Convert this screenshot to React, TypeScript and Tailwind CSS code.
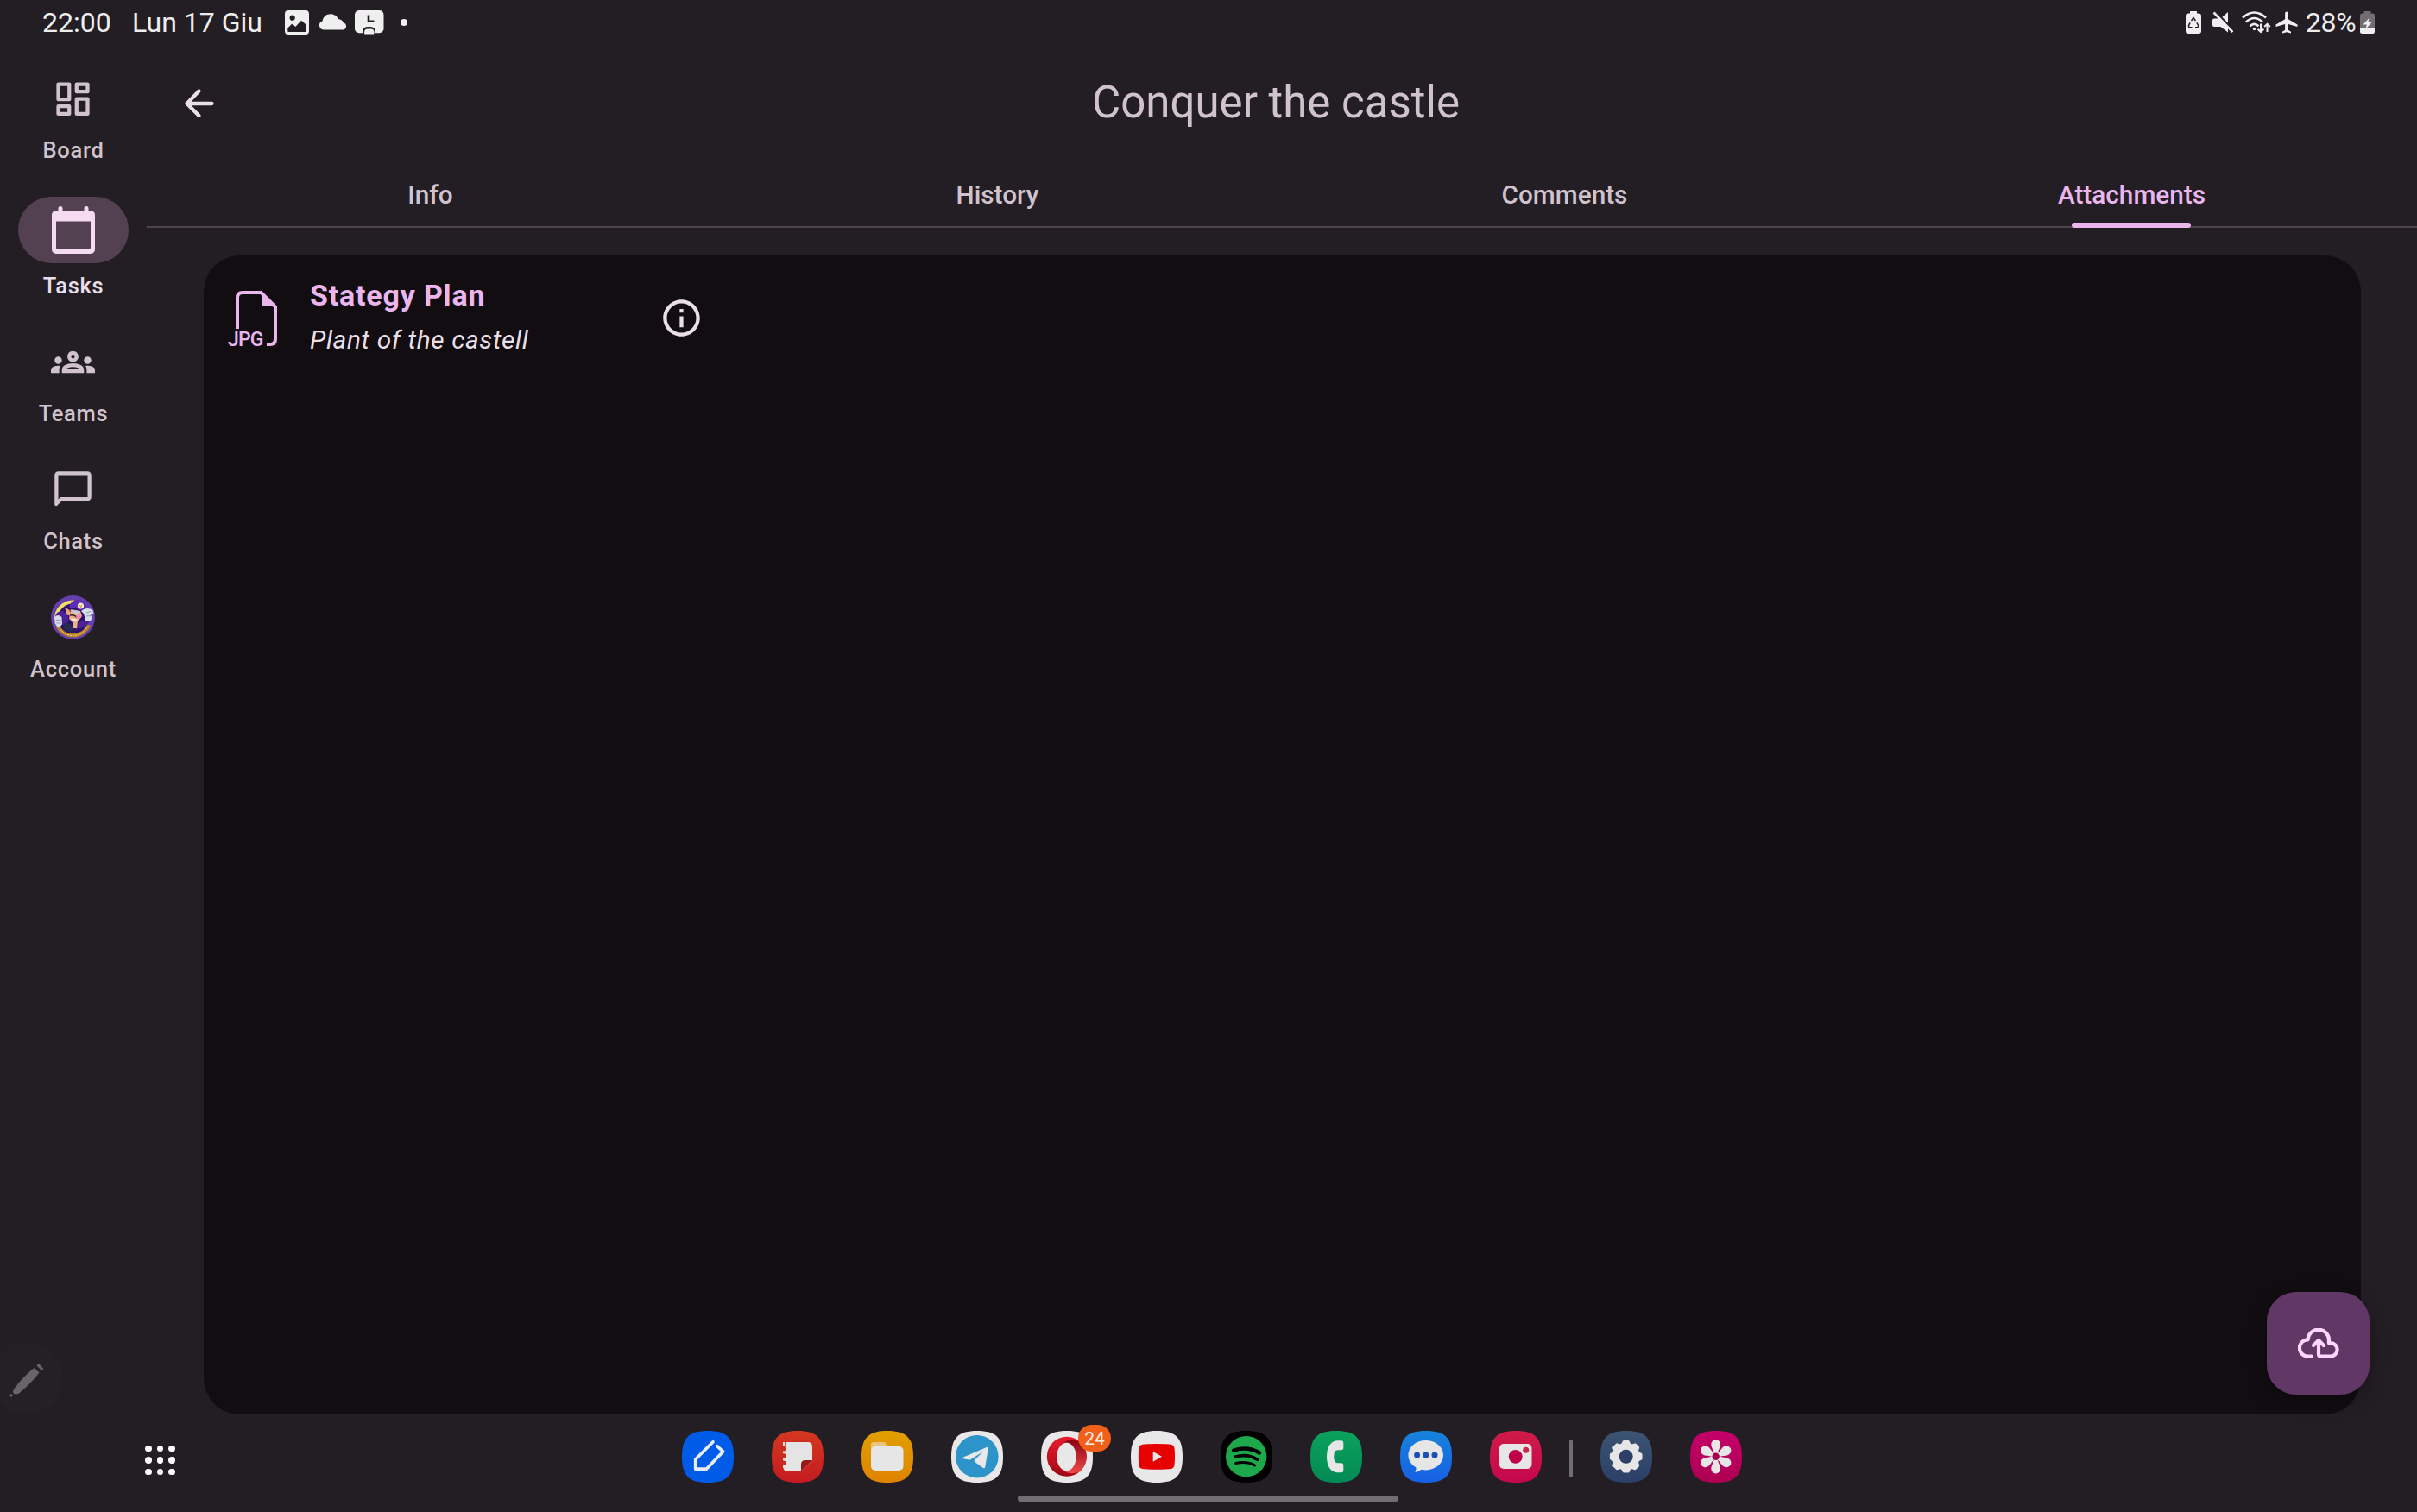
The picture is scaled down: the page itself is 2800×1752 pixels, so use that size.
import type { ReactNode } from "react";
import { MdOutlineGroups, MdInfoOutline, MdAirplanemodeActive } from "react-icons/md";

const SQUIRCLE = "M30 0C52 0 60 8 60 30S52 60 30 60 0 52 0 30 8 0 30 0Z";

function AppIcon({ id, from, to, children }: { id: string; from: string; to: string; children: ReactNode }) {
  return (
    <svg viewBox="0 0 60 60" className="size-[60px] shrink-0">
      <defs>
        <linearGradient id={id} x1="0" y1="0" x2="0" y2="1">
          <stop offset="0" stopColor={from} />
          <stop offset="1" stopColor={to} />
        </linearGradient>
      </defs>
      <path d={SQUIRCLE} fill={`url(#${id})`} />
      {children}
    </svg>
  );
}

function StatusBar() {
  return (
    <header className="flex h-[51px] shrink-0 items-center pl-[49px] text-[32px] leading-none text-[#ededed]">
      <span className="w-[104px]">22:00</span>
      <span className="w-[177px] whitespace-nowrap">Lun 17 Giu</span>
      <svg viewBox="0 0 28 28" className="size-[28px] shrink-0" fill="#efefef">
        <path
          fillRule="evenodd"
          d="M4 0H24a4 4 0 0 1 4 4V24a4 4 0 0 1-4 4H4a4 4 0 0 1-4-4V4a4 4 0 0 1 4-4ZM8.7 5.6a3.1 3.1 0 1 0 0 6.2 3.1 3.1 0 0 0 0-6.2ZM3.3 20.4V24q0 1 1 1H24q1 0 1-1V17L19.8 12.3q-.8-.6-1.5.1L12.3 19 9.3 16.2q-.9-.8-1.7 0Z"
        />
      </svg>
      <svg viewBox="0 0 32 19" className="ml-[12px] h-[19px] w-[32px] shrink-0" fill="#efefef">
        <path d="M5 18.4A5 5 0 0 1 3.6 8.6C4 3.6 8 .2 13 .2c4 0 7.3 2.200 8.800 5.700 3.200.1 5.500 2 6.100 4.700A4 4 0 0 1 28 18.400Z" />
      </svg>
      <svg viewBox="0 0 34 28" className="ml-[9px] h-[28px] w-[34px] shrink-0">
        <rect width="33.500" height="26.300" rx="5" fill="#efefef" />
        <path d="M9 28v-3.500a5.500 5.500 0 0 1 5.500-5.500h4a5.500 5.500 0 0 1 5.500 5.500V28Z" fill="#231e23" />
        <path d="M11 26.500v-1a4 4 0 0 1 4-4h3.500a4 4 0 0 1 4 4v1q0 1-1 1h-9.500q-1 0-1-1Z" fill="#efefef" />
        <path d="M16 5.500V12.700H22.500" fill="none" stroke="#231e23" strokeWidth="2.600" />
      </svg>
      <span className="ml-[19px] size-[8px] rounded-full bg-[#efefef]" />

      <div className="ml-auto flex items-center pr-[49px]">
        <svg viewBox="0 0 18 26" className="h-[26px] w-[18px]">
          <path d="M5 0h8v2.500h2a3 3 0 0 1 3 3V23a3 3 0 0 1-3 3H3a3 3 0 0 1-3-3V5.500a3 3 0 0 1 3-3h2Z" fill="#efefef" />
          <path d="M6.500 11 9 7.500 11.500 11M12.900 13.300 14.600 16.500Q15 18.800 12.500 18.800H11M7.500 18.800H5.500Q3 18.800 3.600 16.300L5.100 13.300" fill="none" stroke="#231e23" strokeWidth="1.500" />
        </svg>
        <svg viewBox="0 0 24 26" className="ml-[13px] h-[26px] w-[24px]" fill="#efefef">
          <path d="M18 1V24.500L9.500 18H2q-2 0-2-2v-5.500q0-2 2-2H9.500Z" />
          <path d="M1 -1.500 25.500 23.500" stroke="#231e23" strokeWidth="3" />
          <path d="M1.500 1.500 23.500 24" stroke="#efefef" strokeWidth="2.600" />
        </svg>
        <svg viewBox="0 0 34 26" className="ml-[10px] h-[26px] w-[34px]" fill="none" stroke="#efefef" strokeWidth="2.600">
          <path d="M1 7.500Q14.500-4.500 28 7.500M5 12.500Q14.500 3.500 24 12.500M9.500 17.200Q14.500 12.500 19.500 17.200" />
          <circle cx="14.500" cy="20.500" r="1.700" fill="#efefef" stroke="none" />
          <path d="M22 14.500V24M18.600 20.800 22 24.200 25.400 20.800M29.500 24V15M26.100 18 29.500 14.800 32.900 18" strokeWidth="2" />
        </svg>
        <MdAirplanemodeActive className="ml-[3px] size-[30px] text-[#efefef]" />
        <span className="ml-[7px] w-[61px] tracking-[-0.4px]">28%</span>
        <svg viewBox="0 0 17 26" className="ml-[2px] h-[26px] w-[17px]">
          <path d="M4.500 0h8v2.500h2a2.500 2.500 0 0 1 2.500 2.500V20H0V5a2.500 2.500 0 0 1 2.500-2.500h2Z" fill="#716d71" />
          <path d="M0 20H17v3.500a2.500 2.500 0 0 1-2.500 2.500h-12A2.500 2.500 0 0 1 0 23.500Z" fill="#efefef" />
          <path d="M10.500 8 3.500 15.500H7.800L6.300 21 13.500 13H9.300Z" fill="#efefef" />
        </svg>
      </div>
    </header>
  );
}

function BoardIcon() {
  return (
    <svg viewBox="0 0 24 24" className="size-[51px]" fill="none" stroke="#d0c3cd" strokeWidth="2" strokeLinejoin="round">
      <path d="M4 4H10V12.300H4ZM14 4H20V8.100H14ZM4 16.100H10V20.200H4ZM14 12.100H20V20.200H14Z" />
    </svg>
  );
}

function CalendarIcon() {
  return (
    <svg viewBox="0 0 50 56" className="h-[56px] w-[50px]" fill="#f5dbf1">
      <path
        fillRule="evenodd"
        d="M5 5H7.500V2.500a2.500 2.500 0 0 1 5 0V5h25V2.500a2.500 2.500 0 0 1 5 0V5H45a5 5 0 0 1 5 5V50a5 5 0 0 1-5 5H5a5 5 0 0 1-5-5V10A5 5 0 0 1 5 5ZM5 17.500V48q0 1.800 1.800 1.800H43.200q1.800 0 1.800-1.800V17.500Z"
      />
    </svg>
  );
}

function ChatIcon() {
  return (
    <svg viewBox="0 0 24 24" className="size-[51px]" fill="#d0c3cd">
      <path fillRule="evenodd" d="M4 2H20a2 2 0 0 1 2 2V16a2 2 0 0 1-2 2H6L3.500 20.500c-.55.55-1.500.2-1.500-.65V4a2 2 0 0 1 2-2ZM4 4V17.200L5.200 16H20V4Z" />
    </svg>
  );
}

function Avatar() {
  return (
    <svg viewBox="0 0 51 51" className="size-[51px]">
      <circle cx="25.500" cy="25.500" r="25.500" fill="#6540ad" />
      <circle cx="25.500" cy="26.500" r="18.500" fill="#2c1269" />
      <path d="M6 28A19.500 19.500 0 0 1 27 7.500" fill="none" stroke="#f2e064" strokeWidth="4" />
      <path d="M8 36A20 20 0 0 0 44 34" fill="none" stroke="#b88022" strokeWidth="4.500" />
      <path d="M10 37.500A18 18 0 0 0 42 36" fill="none" stroke="#f5e7b2" strokeWidth="1" strokeDasharray="2 1" />
      <path d="M5 24Q7 17 14 18L19 22Q22 29 18 33L11 34Z" fill="#4b2399" />
      <path d="M33 30 44 29Q44 36 34 38L27 40Z" fill="#4b2399" />
      <path d="M16 31 24 34 27 41Q20 44 14 39Z" fill="#252b50" />
      <path d="M16 13.500 21.500 17 23.500 24 18.500 22.500Z" fill="#eda184" />
      <path d="M23 16 34 18 36 24 31 30 30 38H26L25 31 21 27Z" fill="#efb183" />
      <path d="M25 17 33 18 32 22 26 20Z" fill="#b9cfe9" />
      <path d="M22 23Q28 22 30 26" fill="none" stroke="#31202d" strokeWidth="1.600" />
      <path d="M23.500 26.500 31 27.500 28.500 29.500 24 28.500Z" fill="#eef0f2" />
      <ellipse cx="32" cy="24.500" rx="2.800" ry="2.600" fill="#f287b8" />
      <path d="M21 15Q22 5 31 5 39 5 41 13L36 18Q27 13 21 15Z" fill="#5d2bb5" />
      <circle cx="34.500" cy="12" r="3.600" fill="#f5f1e6" />
      <path d="M33 11 34.500 13.500 36 10.500" fill="none" stroke="#cba91c" strokeWidth="1.200" />
      <path d="M38 16Q43 13.500 48.500 17L49.500 21 46 22 48 27Q45 31 40 29L38 21 35 18Z" fill="#d8ddea" />
      <path d="M4.500 25Q8 21 12.500 25L13 33Q11 37 7 36L4.500 32Z" fill="#d8ddea" />
      <path d="M6 28.500H11.500M6.500 32H11.500M41 20 46 18.500M41 24 46 23.500" stroke="#8088aa" strokeWidth="0.800" />
    </svg>
  );
}

function RailLabel({ active, children }: { active?: boolean; children: ReactNode }) {
  return (
    <span
      className={
        active
          ? "h-[34px] pl-[1px] text-[25.5px] leading-[34px] font-medium tracking-[0.7px] text-[#eadfe7]"
          : "h-[34px] pl-[1px] text-[25.5px] leading-[34px] font-medium tracking-[0.7px] text-[#d0c3cd]"
      }
    >
      {children}
    </span>
  );
}

function NavRail() {
  return (
    <nav className="relative flex w-[170px] shrink-0 flex-col items-center pt-[38px] pr-px">
      <div className="flex flex-col items-center gap-[17px]">
        <BoardIcon />
        <RailLabel>Board</RailLabel>
      </div>
      <div className="mt-[37px] flex flex-col items-center gap-[9px]">
        <div className="ml-px flex h-[77px] w-[128px] items-center justify-center rounded-full bg-[#534152]">
          <CalendarIcon />
        </div>
        <RailLabel active>Tasks</RailLabel>
      </div>
      <div className="mt-[46px] flex flex-col items-center gap-[17px]">
        <MdOutlineGroups className="size-[51px] text-[#d0c3cd]" />
        <RailLabel>Teams</RailLabel>
      </div>
      <div className="mt-[46px] flex flex-col items-center gap-[17px]">
        <ChatIcon />
        <RailLabel>Chats</RailLabel>
      </div>
      <div className="mt-[46px] flex flex-col items-center gap-[17px]">
        <Avatar />
        <RailLabel>Account</RailLabel>
      </div>
      <div className="absolute bottom-0 left-0 h-[84px] w-[74px] overflow-hidden">
        <div className="absolute top-0 right-[2px] size-[82px] rounded-full bg-[#252023] shadow-[0_1px_3px_#2a2527]" />
        <svg viewBox="0 0 40 40" className="absolute top-[25px] left-[11px] size-[40px]" fill="#696468">
          <path d="M28.500 5 34.500 10.500Q25 23 11 34.500 7.500 36.500 4.800 34.800 3 32.500 5.500 29 15 16 28.500 5Z" />
          <path d="M31.500 2.500q2-3 4.300-.6l2.600 2.900q1.700 2.200-.8 3.400Z" />
          <circle cx="2" cy="37" r="1.700" />
        </svg>
      </div>
    </nav>
  );
}

const TABS = ["Info", "History", "Comments", "Attachments"];

function Tabs() {
  return (
    <div className="flex h-[77px] shrink-0 border-b-2 border-[#4d444c]">
      {TABS.map((tab) => {
        const active = tab === "Attachments";
        return (
          <div
            key={tab}
            className={
              active
                ? "relative flex h-[77px] w-[657px] items-center justify-center pt-[2px] text-[29.75px] font-medium text-[#ebb5ed]"
                : "relative flex h-[77px] w-[657px] items-center justify-center pt-[2px] text-[29.75px] font-medium text-[#d0c3cd]"
            }
          >
            {tab}
            {active && <span className="absolute bottom-0 left-[259px] h-[6px] w-[138px] rounded-[3px] bg-[#ebb5ed]" />}
          </div>
        );
      })}
    </div>
  );
}

function JpgFileIcon() {
  return (
    <div className="relative h-[64px] w-[56px] shrink-0">
      <svg viewBox="0 0 56 64" className="size-full" fill="none" stroke="#ebb5ed" strokeWidth="4">
        <path d="M10 44V8Q10 2 16 2H37.500L54 18.500V56Q54 62 48 62H44" />
        <path d="M38 1.500 54.500 18H43Q38 18 38 13Z" fill="#ebb5ed" stroke="none" />
      </svg>
      <span className="absolute top-[45px] -left-px text-[23px] leading-[24px] font-medium tracking-[-0.8px] text-[#ebb5ed]">JPG</span>
    </div>
  );
}

function Content() {
  return (
    <main className="flex min-w-0 grow flex-col">
      <div className="flex h-[136px] shrink-0 items-center pl-[42px]">
        <svg viewBox="0 0 38 38" className="mt-px size-[38px]" fill="none" stroke="#eadfe7" strokeWidth="4.300" strokeLinecap="round" strokeLinejoin="round">
          <path d="M18.500 4.500 4.500 19 18.500 33M4.500 19H33.500" />
        </svg>
        <h1 className="grow pr-[94px] pb-[2px] text-center text-[51px] leading-none text-[#d0c3cd]">Conquer the castle</h1>
      </div>
      <Tabs />
      <section className="relative mt-[32px] mr-[65px] ml-[66px] grow rounded-[42px] bg-[#110d11]">
        <div className="flex pt-[24px] pl-[29px]">
          <div className="pt-[17px]">
            <JpgFileIcon />
          </div>
          <div className="ml-[38px] flex w-[384px] flex-col">
            <span className="text-[34px] leading-[44px] font-bold tracking-[0.8px] text-[#ebb5ed]">Stategy Plan</span>
            <span className="mt-[8px] text-[29.75px] leading-[44px] tracking-[0.68px] text-[#eadfe7] italic">Plant of the castell</span>
          </div>
          <div className="ml-[21px] pt-[23px]">
            <MdInfoOutline className="size-[51px] text-[#eadfe7]" />
          </div>
        </div>
        <button className="absolute -right-[10px] bottom-[23px] flex size-[119px] items-center justify-center rounded-[34px] bg-[#613766] shadow-[0_8px_24px_rgba(0,0,0,0.3)]">
          <svg viewBox="0 0 48 36" className="h-[36px] w-[48px]" fill="none" stroke="#ffd6fe" strokeWidth="4.200" strokeLinecap="round" strokeLinejoin="round">
            <path d="M15.500 32.500H11.500A9.600 9.600 0 0 1 11.500 13.300 12.200 12.200 0 0 1 36 14.500V17.200H38A7.600 7.600 0 0 1 38 32.500H26.500Q24 32.500 24 30V14.500M18 20 24 14 30 20" />
          </svg>
        </button>
      </section>
    </main>
  );
}

function DockApps() {
  return (
    <div className="flex items-center gap-[44px]">
      <AppIcon id="pen" from="#005ce8" to="#005ce8">
        <path d="M36 12.700 15.700 33V44.200H28.300L47.700 24 41 17.800" fill="none" stroke="#e6ecf8" strokeWidth="3.700" strokeLinecap="round" strokeLinejoin="round" />
      </AppIcon>
      <AppIcon id="notes" from="#d43820" to="#c41b20">
        <path d="M16 13H41.500Q47 13 47 18.500V34L34 46.700H18Q13.500 46.700 13.500 42Z" fill="#e4e4e4" />
        <path d="M34 46.700V39Q34 34 39 34H47Z" fill="#98181a" />
        <g fill="#cd2b20">
          <circle cx="13.500" cy="20.800" r="2.900" />
          <circle cx="13.500" cy="29" r="2.900" />
          <circle cx="13.500" cy="37.200" r="2.900" />
        </g>
        <path d="M13 13H15V17.500H13ZM13 23.500H15V26.300H13ZM13 31.700H15V34.500H13ZM13 40H15V43H13Z" fill="#e4e4e4" />
      </AppIcon>
      <AppIcon id="files" from="#e0a000" to="#df8300">
        <path d="M11 25V16Q11 13 14 13H25.500Q28.700 13 28.700 16V25Z" fill="#e8c47c" />
        <rect x="11" y="18" width="37.500" height="28" rx="5" fill="#e6e6e6" />
      </AppIcon>
      <AppIcon id="telegram" from="#e8e8e8" to="#e8e8e8">
        <circle cx="29.800" cy="29.700" r="24.800" fill="#2c94c9" />
        <path d="M14 30.500 41 19Q43.200 18.300 42.800 20.500L39.200 42Q38.800 44 37 42.900L27.300 36Q25.900 34.800 27.200 33.400L37 24 21.500 33.800 13.800 32.200Q12.500 31.500 14 30.500Z" fill="#e8e8e8" />
      </AppIcon>
      <div className="relative">
        <AppIcon id="opera" from="#e8e8e8" to="#e8e8e8">
          <defs>
            <linearGradient id="operaRing" x1="0" y1="0" x2="0" y2="1">
              <stop offset="0" stopColor="#e81c2e" />
              <stop offset="1" stopColor="#a00714" />
            </linearGradient>
            <linearGradient id="operaSide" x1="0" y1="0" x2="0" y2="1">
              <stop offset="0" stopColor="#8c0512" />
              <stop offset="1" stopColor="#f04a4a" />
            </linearGradient>
          </defs>
          <circle cx="29.800" cy="29.800" r="23" fill="url(#operaRing)" />
          <path d="M25 14.500C31 9 39 10 45.500 13A23 23 0 0 1 45.500 46.700C38 50.500 30 50 25 45Z" fill="url(#operaSide)" />
          <ellipse cx="29.500" cy="30" rx="11.200" ry="16.300" fill="#e8e8e8" />
        </AppIcon>
        <span className="absolute -top-[7px] left-[43px] flex h-[31px] w-[38px] items-center justify-center rounded-full bg-[#f0601a] pt-px text-[21px] leading-none text-[#f4eeea]">24</span>
      </div>
      <AppIcon id="youtube" from="#e8e8e8" to="#e8e8e8">
        <path d="M30 15Q42 15 46.500 15.700 50 16.500 50.500 20 51 25 51 29.800T50.500 39.700Q50 43.200 46.500 44 42 44.700 30 44.700T13.500 44Q9.800 43.200 9.300 39.700 8.800 35 8.800 29.800T9.300 20Q9.800 16.500 13.500 15.700 18 15 30 15Z" fill="#e60000" />
        <path d="M25.700 24 36 29.800 25.700 35.700Z" fill="#e8e8e8" />
      </AppIcon>
      <AppIcon id="spotify" from="#000000" to="#000000">
        <circle cx="29.700" cy="29.700" r="23.700" fill="#1ea84c" />
        <g fill="none" stroke="#000" strokeLinecap="round">
          <path d="M15.200 22.500Q31.500 17.500 45 25.500" strokeWidth="4.400" />
          <path d="M16.700 30.200Q31 26 42.500 33.200" strokeWidth="3.700" />
          <path d="M17.700 37.500Q30 34.500 39.700 40" strokeWidth="3" />
        </g>
      </AppIcon>
      <AppIcon id="phone" from="#0ba25c" to="#038a55">
        <path d="M35.800 11.200H31C23 12 19 19 19 29.700S23 47.500 31 48.300H35.800Q38.300 48.300 38.300 45.800V40Q38.300 37.200 35.800 37.200H31.500Q27.200 37.200 27.200 29.700T31.500 22.200H35.800Q38.300 22.200 38.300 19.600V13.700Q38.300 11.200 35.800 11.200Z" fill="#e6e6e6" />
      </AppIcon>
      <AppIcon id="messages" from="#1684dc" to="#185fe4">
        <ellipse cx="29.700" cy="28.200" rx="20.300" ry="17.200" fill="#e6e6e6" />
        <path d="M18 40Q19.500 44 17.300 48 22 47.500 25.500 44Z" fill="#e6e6e6" />
        <g fill="#1c50b8">
          <circle cx="19.600" cy="28" r="3.500" />
          <circle cx="29.800" cy="28" r="3.500" />
          <circle cx="40" cy="28" r="3.500" />
        </g>
      </AppIcon>
      <AppIcon id="camera" from="#d01c48" to="#c4074c">
        <rect x="11" y="15" width="37.500" height="29" rx="5" fill="#e6e6e6" />
        <circle cx="29.700" cy="29.800" r="7.900" fill="#bf0048" />
        <circle cx="41.700" cy="22.200" r="3.500" fill="#cc2647" />
      </AppIcon>
    </div>
  );
}

function Dock() {
  return (
    <footer className="flex h-[113px] shrink-0 flex-col pt-[19px]">
      <div className="flex h-[60px] items-center pl-[168px]">
        <div className="mt-[8px] mr-[587px] grid w-[35px] grid-cols-3 justify-between gap-[6px]">
          {Array.from({ length: 9 }, (_, i) => (
            <span key={i} className="size-[7.500px] rounded-full bg-white" />
          ))}
        </div>
        <DockApps />
        <span className="mx-[32px] mt-[3px] h-[44px] w-[4px] rounded-full bg-[#716d71]" />
        <div className="flex gap-[44px]">
          <AppIcon id="settings" from="#3c5472" to="#2b3f68">
            <g transform="translate(29.700 29.800)" fill="#e6e6e6">
              <circle r="16" />
              {[0, 45, 90, 135, 180, 225, 270, 315].map((a) => (
                <path key={a} transform={`rotate(${a})`} d="M-5.500-14.500-3.800-18Q-3.400-18.800-2.500-18.800H2.500Q3.400-18.800 3.800-18L5.500-14.500Z" />
              ))}
              <circle r="8" fill="#2c3f66" />
            </g>
          </AppIcon>
          <AppIcon id="gallery" from="#c4006a" to="#ae0052">
            <g transform="translate(29.700 29.800)" fill="#e6e6e6">
              {[0, 60, 120, 180, 240, 300].map((a) => (
                <path key={a} transform={`rotate(${a})`} d="M-2-2C-2.500-8-5.400-10-5.400-14.200A5.400 5.400 0 0 1 5.400-14.200C5.400-10 2.500-8 2-2Z" />
              ))}
              <circle r="4.200" fill="#a80050" />
            </g>
          </AppIcon>
        </div>
      </div>
      <div className="mt-[15px] ml-[1179px] h-[7px] w-[441px] rounded-full bg-[#716d71]" />
    </footer>
  );
}

export default function App() {
  return (
    <div className="flex h-[1752px] w-[2800px] flex-col overflow-hidden bg-[#231e23] font-[Roboto,sans-serif]">
      <StatusBar />
      <div className="flex min-h-0 grow">
        <NavRail />
        <Content />
      </div>
      <Dock />
    </div>
  );
}
